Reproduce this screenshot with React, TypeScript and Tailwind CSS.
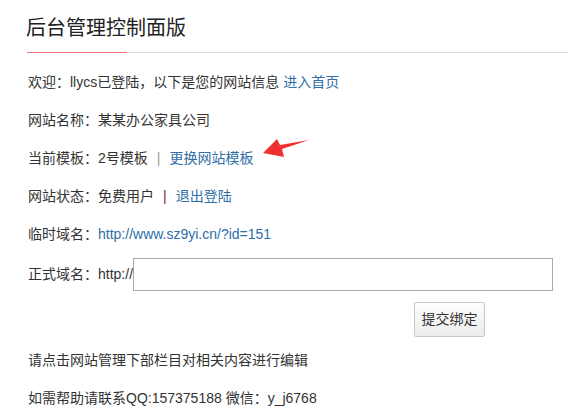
export default function App() {
  const font = { fontFamily: '"Liberation Sans", "Noto Sans CJK SC", sans-serif' }
  return (
    <div className="relative min-h-screen bg-white text-[#333] text-[14px]" style={font}>
      <div className="pl-[26px]">
        <h1 className="pt-[14px] mb-[10px] text-[20px] leading-[28px] font-normal text-[#222]">后台管理控制面版</h1>
      </div>
      <div className="ml-[27px] h-px bg-[#ddd]">
        <div className="w-[100px] h-px bg-[#e8776f]"></div>
      </div>

      <div className="pl-[28px] mt-[10px]">
        <div className="h-[38px] flex items-center">
          欢迎：llycs已登陆，以下是您的网站信息
          <a className="ml-[4px] text-[#2f6ea8]">进入首页</a>
        </div>
        <div className="h-[38px] flex items-center">网站名称：某某办公家具公司</div>
        <div className="h-[38px] flex items-center">
          当前模板：2号模板
          <span className="mx-[9px] text-[#999]">|</span>
          <a className="text-[#2f6ea8]">更换网站模板</a>
        </div>
        <div className="h-[38px] flex items-center">
          网站状态：免费用户
          <span className="mx-[9px] text-[#7a2433]">|</span>
          <a className="text-[#2f6ea8]">退出登陆</a>
        </div>
        <div className="h-[38px] flex items-center">
          临时域名：<a className="text-[#2f6ea8]">http://www.sz9yi.cn/?id=151</a>
        </div>
        <div className="mt-[5px] flex items-center">
          <span>正式域名：http://</span>
          <input type="text" className="w-[420px] h-[33px] border border-[#a9a9a9] outline-none px-2" />
        </div>
        <div className="mt-[11px] ml-[386px]">
          <button className="w-[71px] h-[35px] border border-[#c8c8c8] rounded-[2px] bg-gradient-to-b from-[#fdfdfd] to-[#ececec] text-[14px] text-[#333]">
            提交绑定
          </button>
        </div>
        <div className="mt-[4px] h-[38px] flex items-center">请点击网站管理下部栏目对相关内容进行编辑</div>
        <div className="h-[38px] flex items-center">如需帮助请联系QQ:157375188 微信：y_j6768</div>
      </div>

      <svg className="absolute left-[258px] top-[134px]" width="56" height="28" viewBox="0 0 56 28">
        <path d="M5 19 L19 5 L22 11 L51 6 L24 15 L26 23 Z" fill="#f03030" />
      </svg>
    </div>
  )
}
